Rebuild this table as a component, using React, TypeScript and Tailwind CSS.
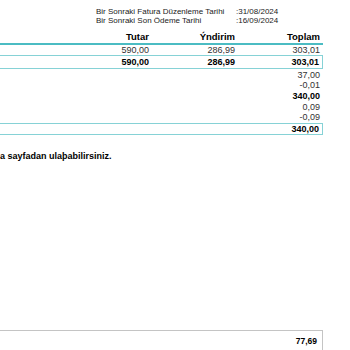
const info = [
  { label: 'Bir Sonraki Fatura Düzenleme Tarihi', value: ':31/08/2024' },
  { label: 'Bir Sonraki Son Ödeme Tarihi', value: ':16/09/2024' },
];

const extras = [
  { value: '37,00', bold: false },
  { value: '-0,01', bold: false },
  { value: '340,00', bold: true },
  { value: '0,09', bold: false },
  { value: '-0,09', bold: false },
];

export default function App() {
  return (
    <div className="w-[350px] h-[350px] bg-white overflow-hidden font-['Liberation_Sans',Arial,sans-serif] text-[#222]">
      <div className="w-[323px]">
        {/* next invoice dates */}
        <div className="pt-[8px] pl-[96px] text-[8px] leading-[8.5px]">
          {info.map(row => (
            <div key={row.label} className="flex">
              <span className="w-[140px]">{row.label}</span>
              <span>{row.value}</span>
            </div>
          ))}
        </div>

        {/* column titles */}
        <div className="mt-[5px] grid grid-cols-[152px_86px_85px] h-[13px] items-center text-[9.5px] font-bold text-black">
          <div className="text-right pr-[3px]">Tutar</div>
          <div className="text-right pr-[3px]">Ýndirim</div>
          <div className="text-right pr-[3px]">Toplam</div>
        </div>

        {/* amounts */}
        <div className="border-t-2 border-[#4bbcc3] text-[9px] leading-[10px]">
          <div className="grid grid-cols-[152px_86px_85px] h-[11px] items-center border-b border-[#86d2d6] text-[#333]">
            <div className="text-right pr-[3px]">590,00</div>
            <div className="text-right pr-[3px]">286,99</div>
            <div className="text-right pr-[3px]">303,01</div>
          </div>
          <div className="grid grid-cols-[152px_86px_85px] h-[13px] border-b border-[#86d2d6] font-bold text-black">
            <div className="flex items-center justify-end pr-[3px]">590,00</div>
            <div className="flex items-center justify-end pr-[3px]">286,99</div>
            <div className="flex items-center justify-end pr-[3px] border-r border-[#86d2d6]">303,01</div>
          </div>
          <div className="border-b border-[#86d2d6] py-[0.5px]">
            {extras.map((row, i) => (
              <div
                key={i}
                className={`h-[10.6px] flex items-center justify-end pr-[3px] ${row.bold ? 'font-bold text-black' : 'text-[#333]'}`}
              >
                {row.value}
              </div>
            ))}
          </div>
          <div className="h-[11px] flex items-center justify-end pr-[3px] border-b border-r border-[#86d2d6] font-bold text-black">
            340,00
          </div>
        </div>

        <p className="mt-[16px] text-[9px] font-bold text-black leading-[10px]">a sayfadan ulaþabilirsiniz.</p>

        {/* bottom summary box */}
        <div className="mt-[169px] h-[22px] border-t border-r border-[#c4c4c4] flex items-center justify-end pr-[5px] text-[8.5px] font-bold text-black">
          77,69
        </div>
      </div>
    </div>
  );
}
